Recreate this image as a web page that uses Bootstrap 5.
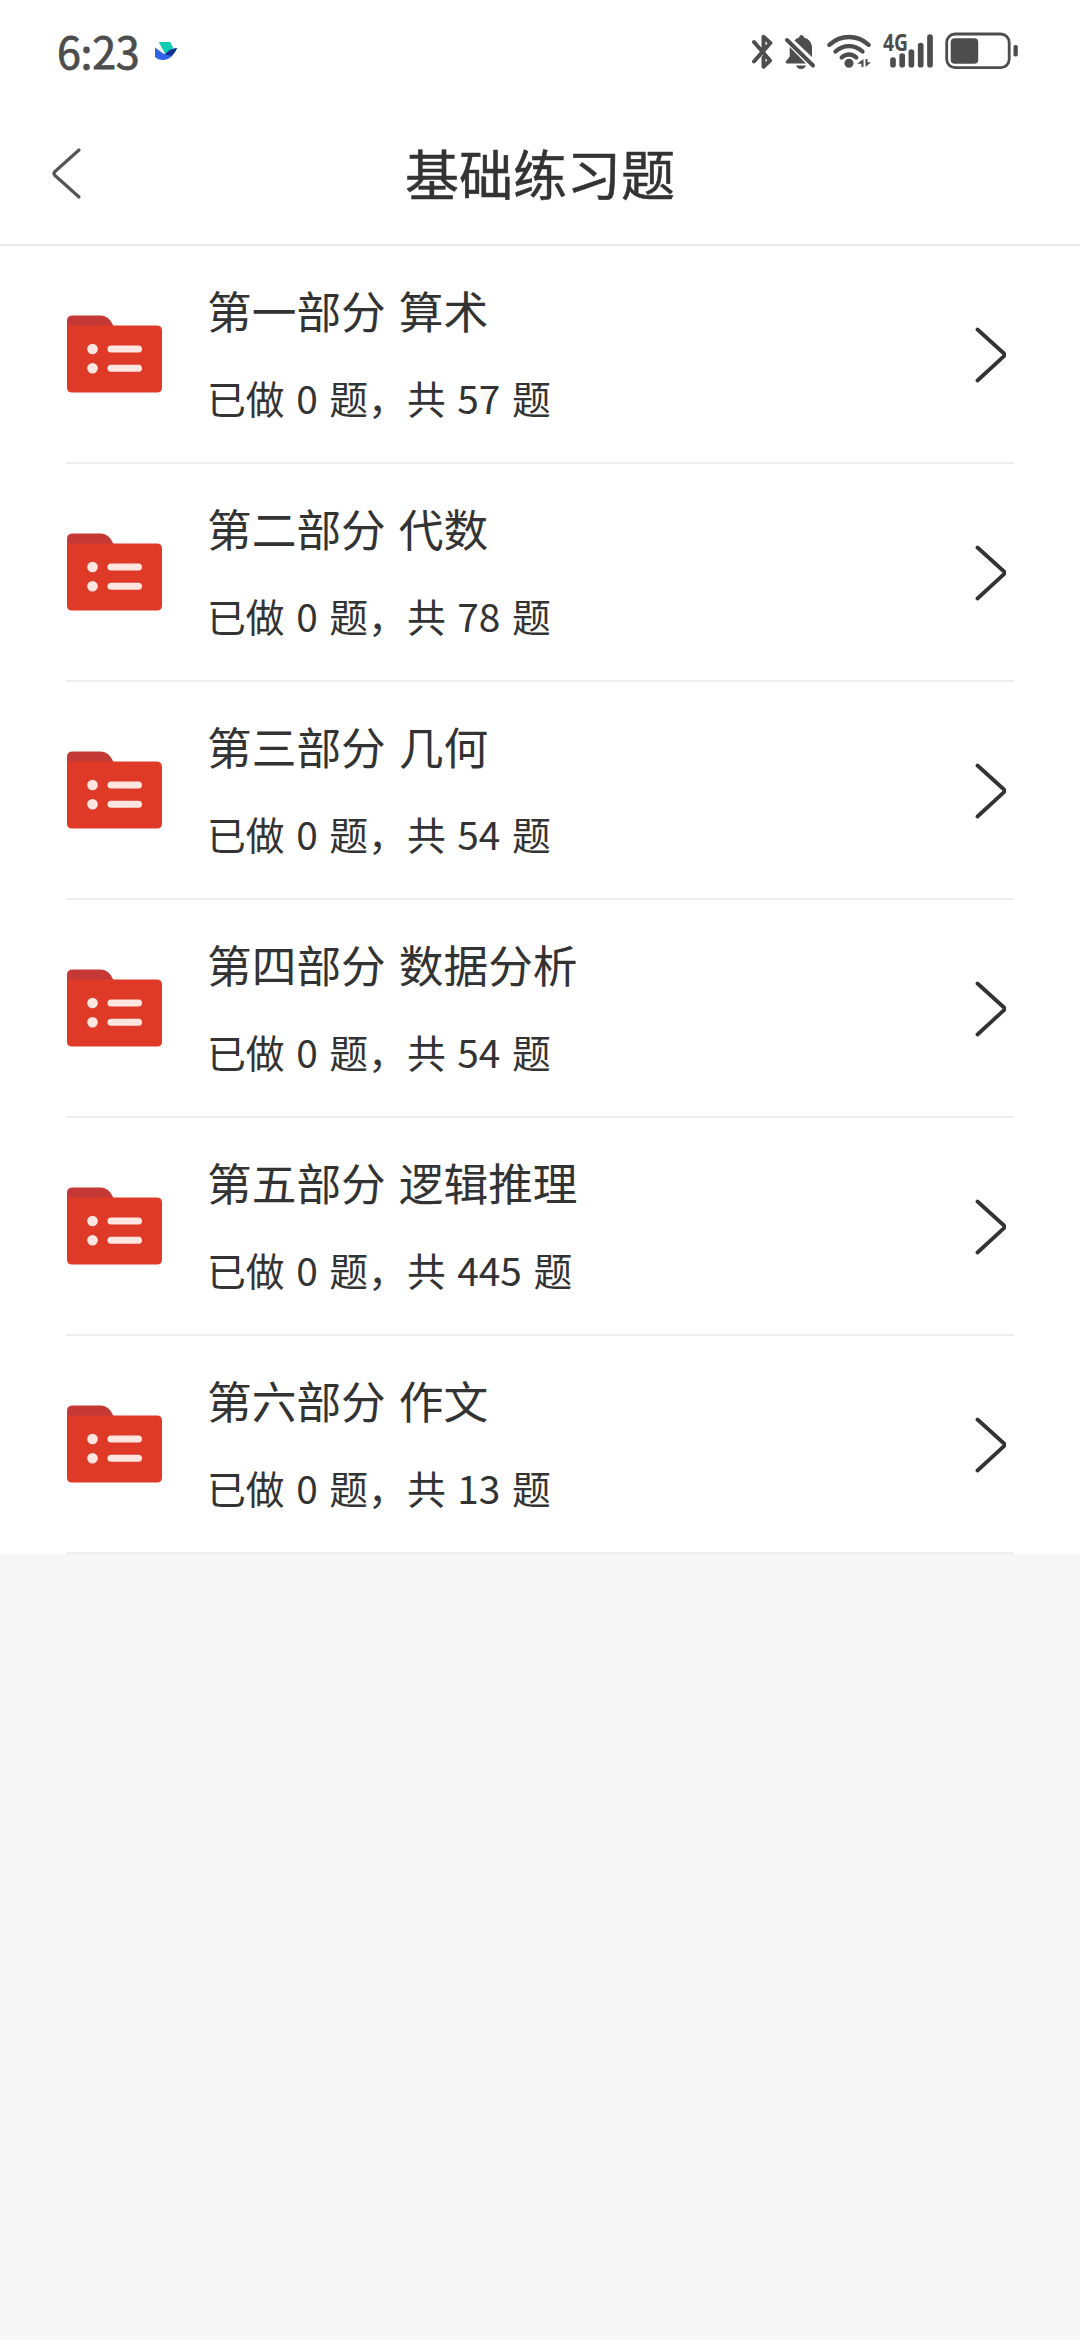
<!DOCTYPE html>
<html lang="zh-CN">
<head>
<meta charset="utf-8">
<meta name="viewport" content="width=device-width, initial-scale=1">
<title>基础练习题</title>
<link href="https://cdn.jsdelivr.net/npm/bootstrap@5.3.0/dist/css/bootstrap.min.css" rel="stylesheet">
<style>
  body { background: #f7f7f7; color: #333; font-family: "Noto Sans CJK SC", sans-serif; min-height: 2340px; }
  .status-bar { height: 104px; padding: 0 62px 0 57px; color: #4d4d4d; }
  .clock { font-size: 43px; line-height: 100px; height: 104px; letter-spacing: -.3px; -webkit-text-stroke: .8px #4d4d4d; }
  .app-logo { margin: 0 0 2px 15px; }
  .title-bar { height: 142px; border-bottom: 2px solid #ededed; padding: 0 48px; }
  .title-bar h1 { font-size: 54px; font-weight: 400; line-height: 80px; padding-bottom: 2px; -webkit-text-stroke: .5px #333; }
  .side { width: 80px; padding-bottom: 2px; }
  .parts { padding: 0 66px; }
  .part { height: 218px; border-bottom: 2px solid #efefef; padding-right: 8px; color: #333; }
  .part-text { margin-left: 45px; padding-bottom: 5px; }
  .part-name { font-size: 44.7px; line-height: 64px; word-spacing: 3px; }
  .part-count { font-size: 38.8px; line-height: 56px; margin-top: 27px; word-spacing: 2.9px; }
  svg { display: block; flex: none; }
  .chevron { margin-top: 2px; }
</style>
</head>
<body>
<header class="bg-white">
  <div class="status-bar d-flex align-items-center">
    <span class="clock">6:23</span>
    <svg class="app-logo" width="24" height="20" viewBox="156 41 24 20">
      <path fill="#2f62e8" d="M157 47.5L166 54l12-6c-2 7-6 12-13 12q-5 0-8-3z"/>
      <path fill="#12cdb6" d="M160.700 42h11.500l3 6-8 6z"/>
      <path fill="#0b2f94" d="M167.500 54.500Q171 48 179.200 48q-2 5-5 7.500-3 .5-6.500-1z"/>
    </svg>
    <div class="d-flex ms-auto">
      <svg width="268" height="64" viewBox="750 19.500 268 64" fill="none" stroke="#4d4d4d" stroke-linecap="round" stroke-linejoin="round">
        <path stroke-width="4" d="M754 41.500L770 60l-6.500 6.200V57M763.500 48V36.300l6.800 6.200L754 61"/>
        <path fill="#4d4d4d" stroke="none" d="M787 59.500L789.700 56V46.500L806 63H786.500q-2-1.500.5-3.500zM794.500 40q2-2.300 4.500-3 .3-2.500 2.500-2.500t2.500 2.500q7 2 8 9v10.500zM796 65h10q-1.500 3.500-5 3.500T796 65z"/>
        <path stroke-width="4" d="M787 39.500L813 65"/>
        <path stroke-width="4.300" d="M829.300 44.300Q838 36.500 849 36.500t19.700 7.800M835.500 51Q841.500 45.700 849 45.700T862.500 51M841.700 57Q845 54 849 54t7.300 3"/>
        <circle cx="849" cy="62.700" r="4.500" fill="#4d4d4d" stroke="none"/>
        <path fill="#4d4d4d" stroke="none" d="M863.500 58.500v8h-2v-3.200H857zM865.500 58.500v8l5.500-4.800h-3.500v-3.200z"/>
        <text x="883" y="50.500" fill="#4d4d4d" stroke="none" font-family="Open Sans, sans-serif" font-weight="700" font-size="22.500" textLength="25" lengthAdjust="spacingAndGlyphs">4G</text>
        <path stroke-width="5.700" d="M893 59.500v4.700M902.200 55.500v8.700M911.400 51.500v12.700M920.700 45v19.200M930 36.500v27.700"/>
        <rect x="946.700" y="33.500" width="62.500" height="33.700" rx="8.500" stroke-width="2.800"/>
        <rect x="950.700" y="37.700" width="27.500" height="25.500" rx="4" fill="#4d4d4d" stroke="none"/>
        <rect x="1013.500" y="44.500" width="4.300" height="11.500" rx="1.800" fill="#4d4d4d" stroke="none"/>
      </svg>
    </div>
  </div>
  <nav class="title-bar d-flex align-items-center justify-content-between">
    <a href="#" class="side" aria-label="返回">
      <svg width="36" height="54" viewBox="48 146 36 54" fill="none" stroke="#555" stroke-width="3.200" stroke-linecap="round" stroke-linejoin="round"><path d="M79 150L55 171.500q-2 2 0 4L79 197"/></svg>
    </a>
    <h1 class="m-0">基础练习题</h1>
    <span class="side"></span>
  </nav>
</header>

<svg width="0" height="0" class="position-absolute">
  <symbol id="folder" viewBox="0 0 96 78">
    <path fill="#c43835" d="M1 15V6q0-5.500 5.500-5.500H35Q43 .5 47.500 11v5z"/>
    <path fill="#df3a27" d="M1 10.500h89.500q5.500 0 5.500 5V72.500q0 5-5 5H6q-5 0-5-5z"/>
    <g fill="#ffe6e1"><circle cx="26.500" cy="34" r="5.300"/><circle cx="26.500" cy="53.300" r="5.300"/>
    <rect x="41.500" y="30.500" width="34.500" height="7" rx="3.500"/><rect x="41.500" y="49.800" width="34.500" height="7" rx="3.500"/></g>
  </symbol>
  <symbol id="next" viewBox="0 0 32 56">
    <path fill="none" stroke="#333" stroke-width="3.800" stroke-linecap="round" stroke-linejoin="round" d="M3.500 2.500L30 26.500q1.200 1.300 0 2.600L3.500 53.500"/>
  </symbol>
</svg>

<main class="parts bg-white">
  <a href="#" class="part d-flex align-items-center text-decoration-none">
    <svg width="96" height="78"><use href="#folder"/></svg>
    <div class="part-text flex-grow-1"><div class="part-name">第一部分 算术</div><div class="part-count">已做 0 题，共 57 题</div></div>
    <svg class="chevron" width="32" height="56"><use href="#next"/></svg>
  </a>
  <a href="#" class="part d-flex align-items-center text-decoration-none">
    <svg width="96" height="78"><use href="#folder"/></svg>
    <div class="part-text flex-grow-1"><div class="part-name">第二部分 代数</div><div class="part-count">已做 0 题，共 78 题</div></div>
    <svg class="chevron" width="32" height="56"><use href="#next"/></svg>
  </a>
  <a href="#" class="part d-flex align-items-center text-decoration-none">
    <svg width="96" height="78"><use href="#folder"/></svg>
    <div class="part-text flex-grow-1"><div class="part-name">第三部分 几何</div><div class="part-count">已做 0 题，共 54 题</div></div>
    <svg class="chevron" width="32" height="56"><use href="#next"/></svg>
  </a>
  <a href="#" class="part d-flex align-items-center text-decoration-none">
    <svg width="96" height="78"><use href="#folder"/></svg>
    <div class="part-text flex-grow-1"><div class="part-name">第四部分 数据分析</div><div class="part-count">已做 0 题，共 54 题</div></div>
    <svg class="chevron" width="32" height="56"><use href="#next"/></svg>
  </a>
  <a href="#" class="part d-flex align-items-center text-decoration-none">
    <svg width="96" height="78"><use href="#folder"/></svg>
    <div class="part-text flex-grow-1"><div class="part-name">第五部分 逻辑推理</div><div class="part-count">已做 0 题，共 445 题</div></div>
    <svg class="chevron" width="32" height="56"><use href="#next"/></svg>
  </a>
  <a href="#" class="part d-flex align-items-center text-decoration-none">
    <svg width="96" height="78"><use href="#folder"/></svg>
    <div class="part-text flex-grow-1"><div class="part-name">第六部分 作文</div><div class="part-count">已做 0 题，共 13 题</div></div>
    <svg class="chevron" width="32" height="56"><use href="#next"/></svg>
  </a>
</main>
<script src="https://cdn.jsdelivr.net/npm/bootstrap@5.3.0/dist/js/bootstrap.bundle.min.js"></script>
</body>
</html>
